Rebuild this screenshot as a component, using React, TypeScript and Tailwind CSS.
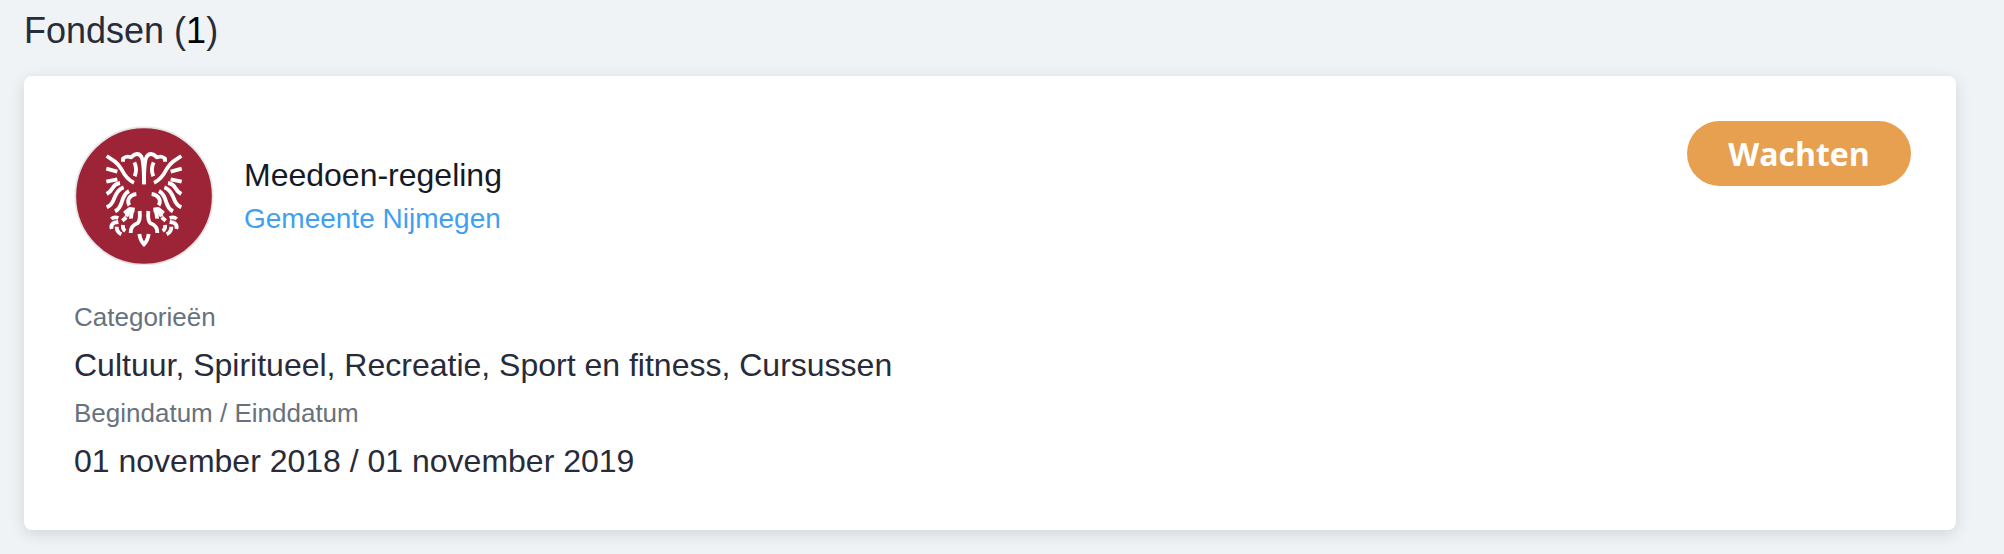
function EagleHalf() {
  return (
    <>
      <path d="M189 140 V131 Q199 121 213 127 Q232 108 244 125 Q252 138 252 208" />
      <path d="M223 142 Q233 162 224 184" />
      <path d="M140 123 L164 139 Q174 146 184 162 Q200 194 222 203" />
      <path d="M139 161 L172 170" />
      <path d="M139 200 L172 193" />
      <path d="M140 237 Q152 230 158 219 Q166 206 180 204" />
      <path d="M140 277 Q154 271 161 254 Q172 223 191 217" />
      <path d="M165 289 Q179 282 185 262 Q192 236 207 228" />
      <path d="M208 271 Q202 262 206 252 Q212 239 229 237" />
      <path d="M193 295 L209 282 L224 284" />
      <path d="M208 286 L199 304" />
      <path d="M219 284 Q212 296 213 311" />
      <path d="M239 288 Q242 318 232 325 Q211 333 212 354" />
      <path d="M154 312 Q162 304 175 309" />
      <path d="M187 317 L199 307" />
      <path d="M155 342 Q151 329 163 323 L175 321" />
      <path d="M170 335 Q170 351 184 358" />
      <path d="M189 330 Q187 342 196 348" />
    </>
  );
}

function OrganizationLogo() {
  return (
    <svg
      viewBox="42 30 420 420"
      className="size-[140px] shrink-0"
      role="img"
      aria-label="Gemeente Nijmegen"
    >
      <circle cx="252" cy="243" r="206" fill="#9c2436" stroke="#e4e2e3" strokeWidth="5" />
      <g fill="none" stroke="#ffffff" strokeWidth="11.5" strokeLinejoin="round">
        <EagleHalf />
        <g transform="translate(504 0) scale(-1 1)">
          <EagleHalf />
        </g>
        <path d="M238 357 Q241 377 252 388 Q263 377 266 357" strokeLinejoin="miter" />
      </g>
    </svg>
  );
}

const details = [
  { label: "Categorieën", value: "Cultuur, Spiritueel, Recreatie, Sport en fitness, Cursussen" },
  { label: "Begindatum / Einddatum", value: "01 november 2018 / 01 november 2019" },
];

export default function App() {
  return (
    <main className="min-h-screen bg-[#eff3f6] pr-12 pb-6 pl-6 font-['Liberation_Sans',Arial,sans-serif] text-[#282b39]">
      <h1 className="pt-2 pb-[22px] text-[36px] leading-[46px]">
        Fondsen (<span className="text-black">1</span>)
      </h1>
      <section className="flex items-start justify-between rounded-lg bg-white p-[45px] shadow-[0_4px_16px_rgba(0,0,0,0.12)]">
        <div className="pt-1 pl-[5px]">
          <div className="flex items-center gap-[30px]">
            <OrganizationLogo />
            <div>
              <h2 className="text-[32px] leading-[48px] text-[#151a26]">Meedoen-regeling</h2>
              <a href="#" className="block text-[28px] leading-[40px] text-[#419ff0]">
                Gemeente Nijmegen
              </a>
            </div>
          </div>
          <dl className="pt-7">
            {details.map((item) => (
              <div key={item.label}>
                <dt className="text-[26px] leading-[48px] text-[#67727c]">{item.label}</dt>
                <dd className="text-[32px] leading-[48px]">{item.value}</dd>
              </div>
            ))}
          </dl>
        </div>
        <span className="flex h-[65px] w-[224px] items-center justify-center rounded-full bg-[#e6a04f] font-['Open_Sans',sans-serif] text-[32px] leading-[40px] font-bold text-white">
          Wachten
        </span>
      </section>
    </main>
  );
}
